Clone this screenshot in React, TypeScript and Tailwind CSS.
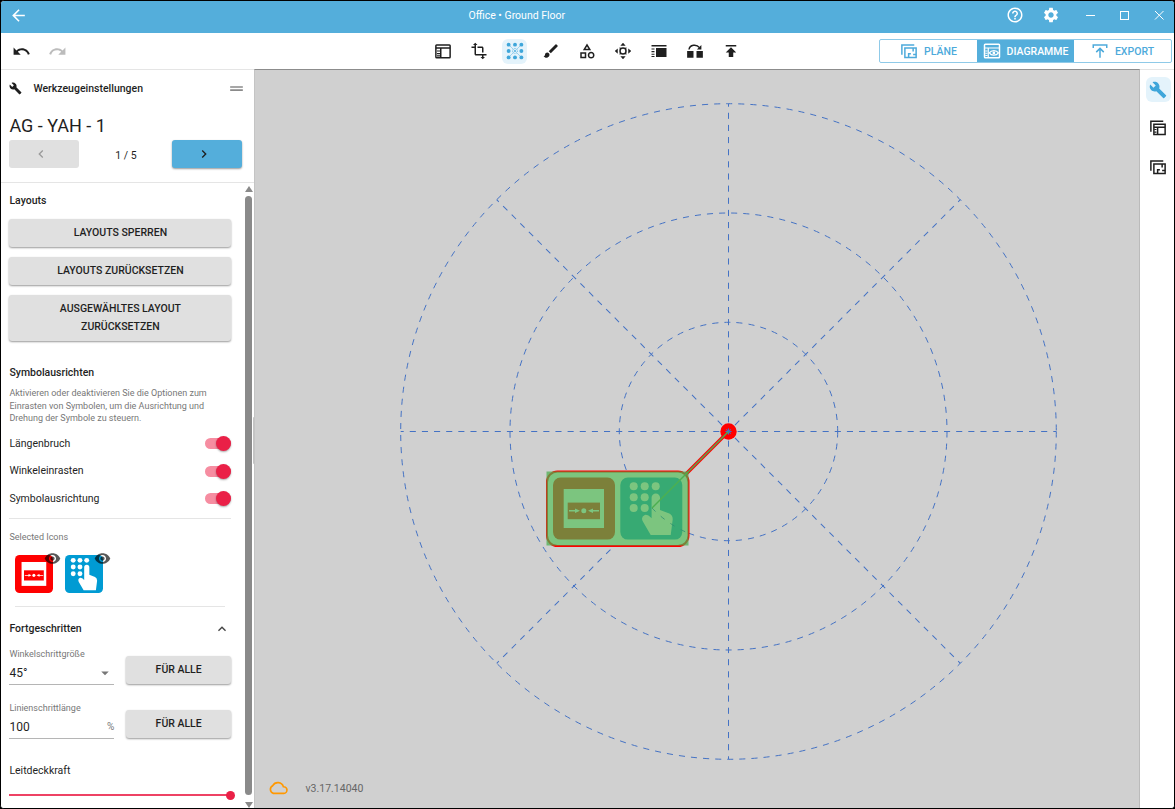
import React, { useState } from 'react';
import {
  MdArrowBack,
  MdArrowDropDown,
  MdBrush,
  MdBuild,
  MdChevronLeft,
  MdChevronRight,
  MdDragHandle,
  MdExpandLess,
  MdHelpOutline,
  MdOutlineCategory,
  MdPublish,
  MdRedo,
  MdRemoveRedEye,
  MdSettings,
  MdTransform,
  MdUndo,
} from 'react-icons/md';

type IconProps = { className?: string };

const LayoutIcon = ({ className = 'size-[18px]' }: IconProps) => (
  <svg viewBox="0 0 24 24" className={className} fill="none" stroke="currentColor" strokeWidth="2">
    <rect x="2.5" y="4" width="19" height="17" rx="1" />
    <path d="M2.5 8H21.5M9 8V21" />
    <path d="M4 12H8M4 15.5H8M4 18.5H8" strokeWidth="1.4" />
  </svg>
);

const DotGridIcon = ({ className = 'size-[18px]' }: IconProps) => (
  <svg viewBox="0 0 24 24" className={className} fill="currentColor">
    {[3.5, 12, 20.5].map(y =>
      [3.5, 12, 20.5].map(x => <circle key={`${x}-${y}`} cx={x} cy={y} r={x === 12 && y === 12 ? 1.2 : 2.6} />)
    )}
    <circle cx="12" cy="12" r="3.2" fill="none" stroke="currentColor" strokeWidth="1" strokeDasharray="1.3 0.7" />
    <path
      d="M6 6L9.5 9.5M18 6L14.5 9.5M6 18L9.5 14.5M18 18L14.5 14.5"
      stroke="currentColor"
      strokeWidth="1.2"
      strokeDasharray="1.4 0.9"
    />
  </svg>
);

const MoveIcon = ({ className = 'size-[18px]' }: IconProps) => (
  <svg viewBox="0 0 24 24" className={className} fill="currentColor">
    <circle cx="12" cy="12" r="4" fill="none" stroke="currentColor" strokeWidth="2" />
    <path d="M12 1L15.5 5H8.5zM12 23L15.5 19H8.5zM1 12L5 8.5V15.5zM23 12L19 8.5V15.5z" />
    <path d="M7.5 7.5L9 9M16.5 7.5L15 9M7.5 16.5L9 15M16.5 16.5L15 15" stroke="currentColor" strokeWidth="1.5" />
  </svg>
);

const LegendIcon = ({ className = 'size-[18px]' }: IconProps) => (
  <svg viewBox="0 0 24 24" className={className} fill="currentColor">
    <path d="M2 4H22V6H2zM2 8.5H6V10H2zM2 12H6V13.5H2zM2 15.5H6V17H2zM8 8H22V20H8zM2 18.5H6V20H2z" />
  </svg>
);

const SwapIcon = ({ className = 'size-[18px]' }: IconProps) => (
  <svg viewBox="0 0 24 24" className={className} fill="currentColor">
    <path d="M1.5 12H10V21H1.5zM14 12H22.5V21H14z" />
    <path d="M4 10C5 3.5 14 2.5 18 7.5" fill="none" stroke="currentColor" strokeWidth="2" />
    <path d="M20.5 4V10H14.5z" />
  </svg>
);

const PlansIcon = ({ className = 'size-[18px]' }: IconProps) => (
  <svg viewBox="0 0 24 24" className={className} fill="none" stroke="currentColor" strokeWidth="2">
    <path d="M2.5 17V4H19" />
    <path d="M6.5 8H21.5V20.5H6.5z" />
    <path d="M11.5 20.5V15.5H14.5M17.5 8V12.5M17.5 16.5H21.5" />
  </svg>
);

const DiagramsIcon = ({ className = 'size-[18px]' }: IconProps) => (
  <svg viewBox="0 0 24 24" className={className} fill="none" stroke="currentColor" strokeWidth="2">
    <rect x="2" y="3" width="20" height="18" rx="1" />
    <path d="M2 8H22M7 8V21" strokeWidth="1.6" />
    <path d="M3 12H6M3 15H6M3 18H6" strokeWidth="1.4" />
    <path d="M8.5 14.5C11 10.5 18 10.5 20.5 14.5C18 18.5 11 18.5 8.5 14.5z" strokeWidth="1.6" />
    <circle cx="14.5" cy="14.5" r="1.8" fill="currentColor" stroke="none" />
  </svg>
);

const ExportIcon = ({ className = 'size-[18px]' }: IconProps) => (
  <svg viewBox="0 0 24 24" className={className} fill="none" stroke="currentColor" strokeWidth="2">
    <path d="M3 8V4H21V8M12 21V9M7 13.5L12 8.5L17 13.5" />
  </svg>
);

const LayoutsStackIcon = ({ className = 'size-[18px]' }: IconProps) => (
  <svg viewBox="0 0 24 24" className={className} fill="none" stroke="currentColor" strokeWidth="2">
    <path d="M2.5 17V3H19" />
    <path d="M6.5 7H21.5V20.5H6.5zM6.5 11H21.5M11.5 11V20.5" />
    <path d="M7 14H10M7 17.5H10" strokeWidth="1.4" />
  </svg>
);

// The two safety symbols share a 62x62 box, both in the panel and on the canvas
const HydrantSymbol = () => (
  <g>
    <rect width="62" height="62" rx="7.5" fill="#ff0000" />
    <rect x="10.7" y="11.4" width="40.3" height="39" fill="#fff" />
    <rect x="14.7" y="25" width="32.3" height="16.6" fill="#ff0000" />
    <circle cx="30.8" cy="33.2" r="2.5" fill="#fff" />
    <path d="M16 32.5H22V31L27 33.2L22 35.4V34H16zM46 32.5H40V31L35 33.2L40 35.4V34H46z" fill="#fff" />
  </g>
);

const KeypadSymbol = () => (
  <g>
    <rect width="62" height="62" rx="7.5" fill="#009bd3" />
    {[8.7, 19.7, 30.5].map(y => (
      <g key={y} fill="#fff">
        <circle cx="13.4" cy={y} r="4" />
        <circle cx="24.4" cy={y} r="4" />
        {y < 10 && <circle cx="35.4" cy={y} r="4" />}
      </g>
    ))}
    <path
      d="M31.3 20A4.2 4.2 0 0 1 39.7 20V32.4L49 36Q52.6 37.7 52.4 42L50.4 57.4H30.4L22.3 43.5Q20.5 39 24.5 37.3Q27.5 36.7 31.3 40.7z"
      fill="#fff"
    />
  </g>
);

const raised = 'rounded-[3px] bg-[#e0e0e0] shadow-[0_1px_2px_rgba(0,0,0,0.4)] text-[10.5px] font-medium';

const ToggleRow = ({ label }: { label: string }) => {
  const [on, setOn] = useState(true);
  return (
    <button type="button" onClick={() => setOn(prev => !prev)} className="flex h-[27.5px] w-full items-center justify-between">
      <span>{label}</span>
      <span className={`flex h-[11px] w-[26px] items-center rounded-full ${on ? 'justify-end bg-[#f68da1]' : 'bg-gray-400'}`}>
        <span className={`size-[15px] rounded-full shadow-[0_1px_2px_rgba(0,0,0,0.35)] ${on ? 'bg-[#ea2047]' : 'bg-white'}`} />
      </span>
    </button>
  );
};

const SelectedSymbol = ({ children }: { children: React.ReactNode }) => (
  <div className="relative size-[38px]">
    <svg viewBox="0 0 62 62" className="size-full">
      {children}
    </svg>
    <MdRemoveRedEye className="absolute -top-[5px] -right-[8px] size-[17px] text-black opacity-65" />
  </div>
);

const tools = [
  LayoutIcon,
  MdTransform,
  DotGridIcon,
  MdBrush,
  MdOutlineCategory,
  MoveIcon,
  LegendIcon,
  SwapIcon,
  MdPublish,
];

const modes = [
  { label: 'PLÄNE', Icon: PlansIcon },
  { label: 'DIAGRAMME', Icon: DiagramsIcon },
  { label: 'EXPORT', Icon: ExportIcon },
];

const Header = () => (
  <header className="flex h-8 shrink-0 items-center bg-[#54aedb] pb-[4px] text-white">
    <MdArrowBack className="ml-2 size-[19px]" />
    <span className="ml-[440.5px] pt-[2px] text-[10.5px]">Office • Ground Floor</span>
    <div className="mr-[9px] ml-auto flex items-center">
      <MdHelpOutline className="mr-[18px] size-[18px]" />
      <MdSettings className="mr-[25px] size-[18px]" />
      <svg viewBox="0 0 80 12" className="h-3 w-20" fill="none" stroke="currentColor">
        <path d="M1 6.5H10" />
        <rect x="35.5" y="2.5" width="8" height="8" />
        <path d="M70 2L78.5 10.5M78.5 2L70 10.5" />
      </svg>
    </div>
  </header>
);

const Toolbar = () => {
  const [tool, setTool] = useState(2);
  const [mode, setMode] = useState(1);
  return (
    <div className="flex h-9 shrink-0 items-center bg-white">
      <div className="flex w-[429px] items-center gap-[17px] pl-[11px]">
        <MdUndo className="size-[19px]" />
        <MdRedo className="size-[19px] text-[#bcbcbc]" />
      </div>
      <div className="flex gap-[11px]">
        {tools.map((Icon, i) => (
          <button
            key={i}
            type="button"
            onClick={() => setTool(i)}
            className={`flex size-[25px] items-center justify-center rounded-md ${tool === i ? 'bg-[#e4f3fb] text-[#3fa6da]' : ''}`}
          >
            <Icon className="size-[18px]" />
          </button>
        ))}
      </div>
      <div className="mr-[2px] ml-auto flex h-6 w-[293px] overflow-hidden rounded-[2px] border border-[#8fcae8]">
        {modes.map(({ label, Icon }, i) => (
          <button
            key={label}
            type="button"
            onClick={() => setMode(i)}
            className={`flex flex-1 items-center justify-center gap-[6px] text-[10.5px] font-medium ${
              mode === i ? 'bg-[#54aedb] text-white' : 'text-[#4daadb]'
            }`}
          >
            <Icon className="size-[18px]" />
            <span className="pt-px">{label}</span>
          </button>
        ))}
      </div>
    </div>
  );
};

const Sidebar = () => (
  <aside className="flex w-[253px] shrink-0 flex-col border-t border-[#e5e5e5] bg-white text-[10.5px]">
    <div className="h-[113px] shrink-0 border-b border-[#e5e5e5] pr-[11.5px] pl-[8.4px]">
      <div className="flex h-[37px] items-center">
        <MdBuild className="size-[13px]" />
        <span className="ml-[11px] pt-px font-medium">Werkzeugeinstellungen</span>
        <MdDragHandle className="-mr-[3px] ml-auto size-[19px] text-[#8a8a8a]" />
      </div>
      <h1 className="mb-px pt-[6px] text-[18px] leading-[26px]">AG - YAH - 1</h1>
      <div className="flex items-center justify-between">
        <button type="button" className="flex h-7 w-[70px] items-center justify-center rounded-[3px] bg-[#e0e0e0] pr-1.5 text-[#9a9a9a]">
          <MdChevronLeft className="size-4" />
        </button>
        <span className="pt-[3px]">1 / 5</span>
        <button type="button" className="flex h-7 w-[70px] items-center justify-center rounded-[3px] bg-[#54aedb] pr-1.5 shadow-[0_1px_2px_rgba(0,0,0,0.4)]">
          <MdChevronRight className="size-4" />
        </button>
      </div>
    </div>

    <div className="flex min-h-0 flex-1">
      <div className="w-[236px] overflow-hidden pr-[5.6px] pl-[8.4px]">
        <h2 className="pt-2 font-medium leading-[20px]">Layouts</h2>
        <div className="mt-[8px] flex flex-col gap-[10px]">
          <button type="button" className={`${raised} h-7`}>LAYOUTS SPERREN</button>
          <button type="button" className={`${raised} h-7`}>LAYOUTS ZURÜCKSETZEN</button>
          <button type="button" className={`${raised} h-[46px] px-10 leading-[18.5px]`}>AUSGEWÄHLTES LAYOUT ZURÜCKSETZEN</button>
        </div>

        <h2 className="mt-[22px] font-medium leading-[20px]">Symbolausrichten</h2>
        <p className="mt-[4px] mb-[5.5px] text-[9px] leading-[12.5px] text-[#777]">
          Aktivieren oder deaktivieren Sie die Optionen zum Einrasten von Symbolen, um die Ausrichtung und Drehung der Symbole zu steuern.
        </p>
        <ToggleRow label="Längenbruch" />
        <ToggleRow label="Winkeleinrasten" />
        <ToggleRow label="Symbolausrichtung" />

        <div className="mt-[5px] border-t border-[#e5e5e5] pt-[11px]">
          <p className="text-[9px] leading-[14px] text-[#777]">Selected Icons</p>
          <div className="mx-1.5 mt-[11px] flex gap-[12px] border-b border-[#e5e5e5] pb-[13px]">
            <SelectedSymbol><HydrantSymbol /></SelectedSymbol>
            <SelectedSymbol><KeypadSymbol /></SelectedSymbol>
          </div>
        </div>

        <div className="mt-[12px] flex h-5 items-center justify-between pr-[1px]">
          <h2 className="font-medium">Fortgeschritten</h2>
          <MdExpandLess className="size-4 text-[#444]" />
        </div>

        <div className="mt-[9px] flex h-[54px] justify-between">
          <div className="w-[105px]">
            <p className="text-[9px] leading-[13px] text-[#777]">Winkelschrittgröße</p>
            <div className="flex h-[24px] items-center border-b border-[#b5b5b5] pt-px text-[12px]">
              45°
              <MdArrowDropDown className="ml-auto size-[18px] text-[#777]" />
            </div>
          </div>
          <button type="button" className={`${raised} mt-2 h-7 w-[105.5px]`}>FÜR ALLE</button>
        </div>
        <div className="flex h-[54px] justify-between">
          <div className="w-[105px]">
            <p className="text-[9px] leading-[13px] text-[#777]">Linienschrittlänge</p>
            <div className="flex h-[24px] items-center justify-between border-b border-[#b5b5b5] pt-px text-[12px]">
              100 <span className="text-[10px] text-[#777]">%</span>
            </div>
          </div>
          <button type="button" className={`${raised} mt-2 h-7 w-[105.5px]`}>FÜR ALLE</button>
        </div>

        <p className="mt-[6px] leading-[18px]">Leitdeckkraft</p>
        <div className="mt-[10.5px] flex h-[10px] items-center">
          <span className="h-[2px] flex-1 bg-[#ee4264]" />
          <span className="-mr-1 -ml-1 size-[9px] rounded-full bg-[#ea2047]" />
        </div>
      </div>

      <div className="ml-[7px] flex w-[9px] flex-col items-center justify-between pt-[3px]">
        <svg viewBox="0 0 8 6" className="h-[6px] w-2" fill="#8a8a8a"><path d="M4 0L8 6H0z" /></svg>
        <div className="my-[4px] w-[7px] flex-1 rounded-full bg-[#8a8a8a]" />
        <svg viewBox="0 0 8 6" className="mt-[3px] h-[6px] w-2" fill="#8a8a8a"><path d="M0 0H8L4 6z" /></svg>
      </div>
    </div>
  </aside>
);

const CX = 728.5;
const CY = 431.5;
const RADII = [109.2, 218.5, 327.8];
const SPOKES = [0, 45, 90, 135, 180, 225, 270, 315];

const PolarGrid = () => (
  <g fill="none" stroke="#4472c4" strokeWidth="1" strokeDasharray="6.1 6.04">
    {RADII.map(r => (
      <circle key={r} cx={CX} cy={CY} r={r} />
    ))}
    {SPOKES.map(angle => (
      <line
        key={angle}
        x1={CX}
        y1={CY}
        x2={CX + RADII[2]}
        y2={CY}
        strokeDashoffset="3"
        transform={`rotate(${angle} ${CX} ${CY})`}
      />
    ))}
  </g>
);

const Canvas = () => (
  <main className="relative min-w-0 flex-1 border-t border-r border-l border-t-[#8c8c8c] border-r-[#bbb] border-l-[#c4c4c4] bg-[#d0d0d0]">
    <svg viewBox="255 70 884 738" className="block h-full w-full">
      <circle cx={CX} cy={CY} r="8.2" fill="#ff0000" />
      <PolarGrid />
      <line x1="725" y1="435" x2="652" y2="508" stroke="#ff0000" strokeWidth="3.6" />
      <rect x="547" y="471.5" width="141.5" height="74.5" rx="10.5" fill="#fff" stroke="#ff0000" strokeWidth="2" />
      <g transform="translate(553 477.6)"><HydrantSymbol /></g>
      <g transform="translate(620.3 477.6)"><KeypadSymbol /></g>
      <rect x="546.5" y="471.5" width="142" height="74" fill="#4caf50" opacity="0.73" />
      <path d="M652 508A109.2 109.2 0 0 0 688 533" fill="none" stroke="#2f8f72" strokeWidth="0.8" strokeDasharray="5 7" />
      <line x1={CX} y1={CY} x2="652" y2="508" stroke="#4caf50" strokeWidth="1.4" />
    </svg>
    <div className="absolute top-[347px] -left-[2px] h-[47px] w-[2px] rounded-full bg-[#c4c4c4]" />
    <div className="absolute bottom-[10px] left-[13px] flex items-center gap-[17.5px] text-[10.5px] text-[#666]">
      <svg viewBox="0 0 24 24" className="size-5" fill="none" stroke="#ff9800" strokeWidth="2">
        <path d="M19 18.5H6.5A5 5 0 0 1 5.7 9.2A7 7 0 0 1 18.5 10.5A4 4 0 0 1 19 18.5z" />
      </svg>
      <span className="pt-px">v3.17.14040</span>
    </div>
  </main>
);

const RightRail = () => {
  const [active, setActive] = useState(0);
  return (
    <nav className="flex w-[34px] shrink-0 flex-col items-center gap-[13.5px] border-t border-[#e5e5e5] bg-white pt-[7px] pl-[2px]">
      {[MdBuild, LayoutsStackIcon, PlansIcon].map((Icon, i) => (
        <button
          key={i}
          type="button"
          onClick={() => setActive(i)}
          className={`flex size-[25px] items-center justify-center rounded-md ${active === i ? 'bg-[#e4f3fb] text-[#3fa6da]' : ''}`}
        >
          <Icon className="size-[18px]" />
        </button>
      ))}
    </nav>
  );
};

const App: React.FC = () => (
  <div className="h-screen w-full bg-black">
    <div className="flex h-full w-full flex-col overflow-hidden rounded-[4px] border border-black bg-white font-['Roboto',sans-serif] text-[#1f1f1f]">
      <Header />
      <Toolbar />
      <div className="flex min-h-0 flex-1">
        <Sidebar />
        <Canvas />
        <RightRail />
      </div>
    </div>
  </div>
);

export default App;
